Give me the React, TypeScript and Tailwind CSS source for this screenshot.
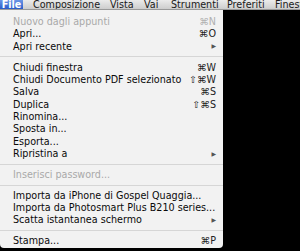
type Item =
  | { sep: true }
  | { label: string; shortcut?: string; submenu?: boolean; disabled?: boolean };

const items: Item[] = [
  { label: "Nuovo dagli appunti", shortcut: "⌘N", disabled: true },
  { label: "Apri...", shortcut: "⌘O" },
  { label: "Apri recente", submenu: true },
  { sep: true },
  { label: "Chiudi finestra", shortcut: "⌘W" },
  { label: "Chiudi Documento PDF selezionato", shortcut: "⇧⌘W" },
  { label: "Salva", shortcut: "⌘S" },
  { label: "Duplica", shortcut: "⇧⌘S" },
  { label: "Rinomina..." },
  { label: "Sposta in..." },
  { label: "Esporta..." },
  { label: "Ripristina a", submenu: true },
  { sep: true },
  { label: "Inserisci password...", disabled: true },
  { sep: true },
  { label: "Importa da iPhone di Gospel Quaggia..." },
  { label: "Importa da Photosmart Plus B210 series..." },
  { label: "Scatta istantanea schermo", submenu: true },
  { sep: true },
  { label: "Stampa...", shortcut: "⌘P" },
];

// title + the width of its slot in the bar
const menus = [
  { name: "Composizione", w: "w-[77px]" },
  { name: "Vista", w: "w-[34px]" },
  { name: "Vai", w: "w-[27px]" },
  { name: "Strumenti", w: "w-[56px]" },
  { name: "Preferiti", w: "w-[48px]" },
  { name: "Finestra", w: "w-[60px]" },
];

export default function App() {
  return (
    <div className="w-[300px] h-[251px] bg-black overflow-hidden [font-family:'DejaVu_Sans',sans-serif] leading-none">
      {/* Menu bar */}
      <div className="h-[10px] flex items-center bg-gradient-to-b from-[#ebebeb] to-[#cdcdcd] border-b border-[#9a9a9a] text-[#1a1a1a] text-[9.6px] whitespace-nowrap overflow-hidden">
        <div className="h-full w-[23px] shrink-0 flex items-center justify-center bg-gradient-to-b from-[#6a95e6] to-[#2a5cc9] text-white font-bold">
          File
        </div>
        <div className="flex ml-[10px]">
          {menus.map((m) => (
            <span key={m.name} className={`${m.w} shrink-0`}>
              {m.name}
            </span>
          ))}
        </div>
      </div>

      {/* File menu */}
      <div className="w-[223px] bg-[#f2f2f2] pt-[5.5px] pb-[1px] rounded-b-[4px] text-[#0a0a0a] text-[9.6px]">
        {items.map((it, i) =>
          "sep" in it ? (
            <div key={i} className="h-[8.6px] flex items-center">
              <div className="h-px w-full bg-[#d6d6d6]" />
            </div>
          ) : (
            <div key={i} className="h-[12.35px] flex items-center justify-between pl-[13px] pr-[7px] whitespace-nowrap">
              <span className={it.disabled ? "text-[#a9a9a9]" : ""}>{it.label}</span>
              {it.shortcut && (
                <span className={it.disabled ? "text-[#b0b0b0]" : "text-[#222]"}>{it.shortcut}</span>
              )}
              {it.submenu && <span className="text-[#555] text-[6px]">▶</span>}
            </div>
          )
        )}
      </div>
    </div>
  );
}
